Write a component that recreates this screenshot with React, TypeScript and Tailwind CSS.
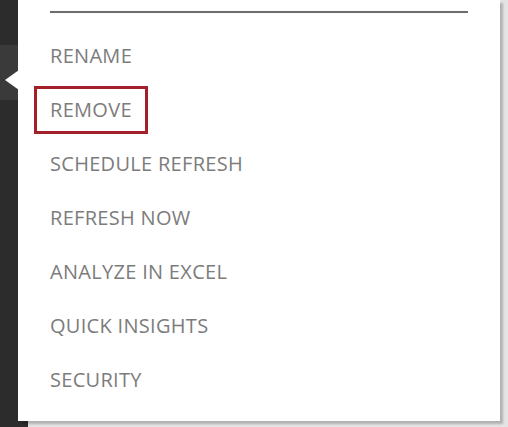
import React from "react";

const items = [
  "RENAME",
  "REMOVE",
  "SCHEDULE REFRESH",
  "REFRESH NOW",
  "ANALYZE IN EXCEL",
  "QUICK INSIGHTS",
  "SECURITY",
];

export default function App() {
  return (
    <div className="relative w-[508px] h-[427px] overflow-hidden bg-white flex">
      {/* dark sidebar */}
      <div className="w-[28px] h-full bg-[#2c2c2c] flex flex-col">
        <div className="h-[45px]" />
        <div className="h-[55px] bg-[#3a3a3a]" />
      </div>
      {/* area under panel */}
      <div className="flex-1 h-full bg-[#e4e4e4]" />

      {/* pointer arrow */}
      <div className="absolute left-[5px] top-[70px] w-0 h-0 border-y-[10px] border-y-transparent border-r-[14px] border-r-white" />

      {/* popup panel */}
      <div
        className="absolute left-[18px] top-0 w-[482px] h-[421px] bg-white shadow-[3px_3px_2px_rgba(0,0,0,0.22)] flex flex-col"
        style={{ fontFamily: '"Open Sans", "Liberation Sans", sans-serif' }}
      >
        <div className="mx-[32px] mt-[11px] h-[2px] bg-[#6e6e6e] shadow-[0_0_1px_rgba(0,0,0,0.25)]" />
        <div className="flex flex-col items-start pl-[16px] mt-[19px] gap-[6px]">
          {items.map((t) => (
            <div
              key={t}
              className={
                "h-[48px] px-[13px] flex items-center border-[3px] text-[20px] tracking-[0.3px] leading-none text-[#7c7c7c] " +
                (t === "REMOVE" ? "border-[#a31f2a]" : "border-transparent")
              }
            >
              {t}
            </div>
          ))}
        </div>
      </div>
    </div>
  );
}
